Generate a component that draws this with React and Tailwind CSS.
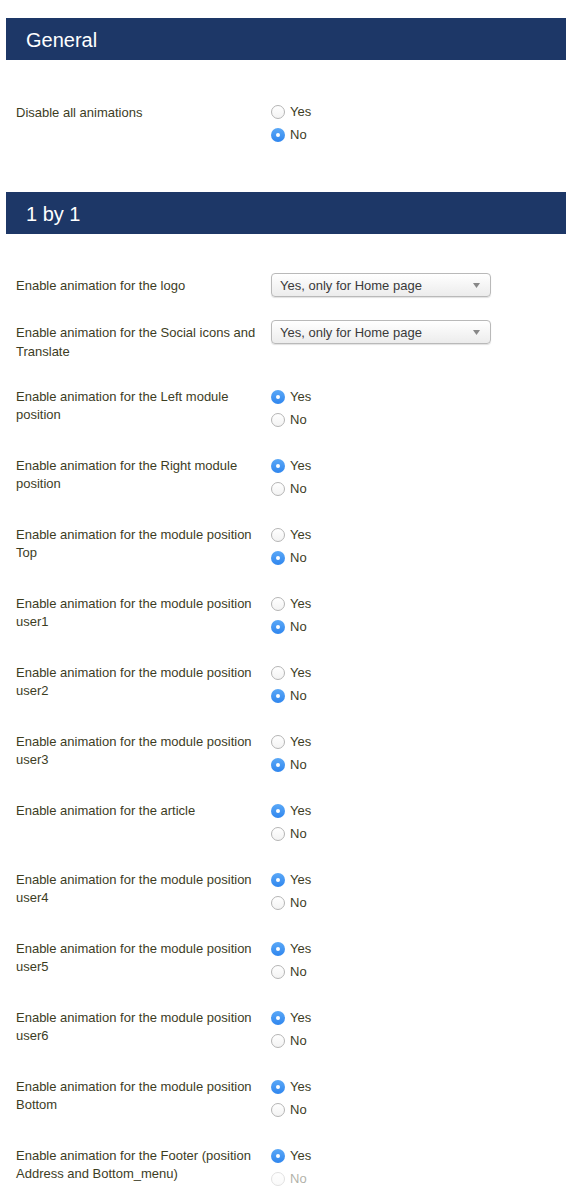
const rows = [
    { label: "Enable animation for the Left module position", value: "yes" },
    { label: "Enable animation for the Right module position", value: "yes" },
    { label: "Enable animation for the module position Top", value: "no" },
    { label: "Enable animation for the module position user1", value: "no" },
    { label: "Enable animation for the module position user2", value: "no" },
    { label: "Enable animation for the module position user3", value: "no" },
    { label: "Enable animation for the article", value: "yes" },
    { label: "Enable animation for the module position user4", value: "yes" },
    { label: "Enable animation for the module position user5", value: "yes" },
    { label: "Enable animation for the module position user6", value: "yes" },
    { label: "Enable animation for the module position Bottom", value: "yes" },
    { label: "Enable animation for the Footer (position Address and Bottom_menu)", value: "yes", fade: true },
];

const SectionHeader = ({ title }) => (
    <div className="ml-[6px] h-[42px] bg-[#1d3767] flex items-center pl-[20px] pt-[2px] text-white text-[20px] leading-none">
        {title}
    </div>
);

const Radio = ({ checked, label, faded }) => (
    <div className={"h-[23px] flex items-center gap-[5px] " + (faded ? "opacity-40" : "")}>
        {checked ? (
            <span className="w-[14px] h-[14px] rounded-full bg-gradient-to-b from-[#5aa8f7] to-[#2f86ee] flex items-center justify-center">
                <span className="w-[4px] h-[4px] rounded-full bg-white"></span>
            </span>
        ) : (
            <span className="w-[14px] h-[14px] rounded-full border border-[#b5b5b5] bg-gradient-to-b from-white to-[#f3f3f3]"></span>
        )}
        <span className="text-[13px] text-[#3d3d1f] pt-[1px]">{label}</span>
    </div>
);

const YesNo = ({ value, fade }) => (
    <div className="flex flex-col">
        <Radio checked={value === "yes"} label="Yes" />
        <Radio checked={value === "no"} label="No" faded={fade} />
    </div>
);

const Select = () => (
    <div className="w-[220px] h-[24px] rounded-[4px] border border-[#b9b9b9] bg-gradient-to-b from-white to-[#ececec] shadow-[0_1px_1px_rgba(0,0,0,0.12)] flex items-center justify-between pl-[8px] pr-[10px]">
        <span className="text-[13px] text-[#3a3a3a] pt-[1px]">Yes, only for Home page</span>
        <svg width="7" height="5" viewBox="0 0 7 5">
            <path d="M0 0 L7 0 L3.5 5 Z" fill="#888" />
        </svg>
    </div>
);

const Label = ({ children, className = "" }) => (
    <div className={"w-[255px] pr-[12px] text-[13px] leading-[18px] text-[#3d3d1f] " + className}>
        {children}
    </div>
);

export default function App() {
    return (
        <div className="w-[566px] pt-[18px] bg-white" style={{ fontFamily: '"Liberation Sans", Arial, sans-serif' }}>
            <SectionHeader title="General" />
            <div className="pl-[16px] pt-[40px] flex">
                <Label className="pt-[4px]">Disable all animations</Label>
                <YesNo value="no" />
            </div>

            <div className="mt-[46px]">
                <SectionHeader title="1 by 1" />
            </div>

            <div className="pl-[16px] pt-[39px] flex flex-col">
                <div className="flex items-center">
                    <Label className="pt-[2px]">Enable animation for the logo</Label>
                    <Select />
                </div>
                <div className="flex items-start mt-[23px] mb-[24px]">
                    <Label className="pt-[3px] leading-[19px]">Enable animation for the Social icons and Translate</Label>
                    <Select />
                </div>
                <div className="flex flex-col gap-[23px]">
                    {rows.map((r) => (
                        <div key={r.label} className="flex items-start">
                            <Label className="pt-[3px]">{r.label}</Label>
                            <YesNo value={r.value} fade={r.fade} />
                        </div>
                    ))}
                </div>
            </div>
        </div>
    );
}
